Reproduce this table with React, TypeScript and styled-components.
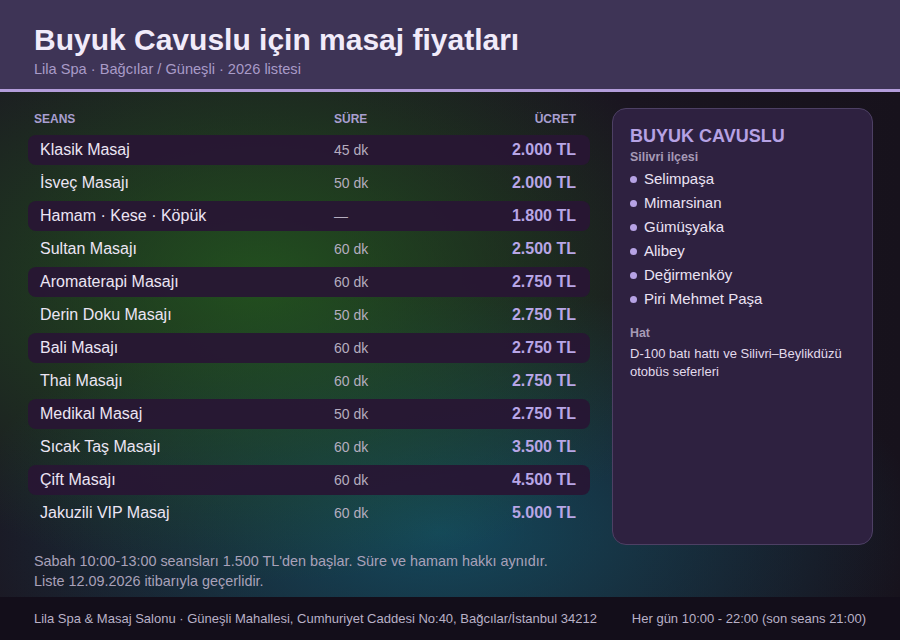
import React from "react";
import styled, { createGlobalStyle } from "styled-components";

const Global = createGlobalStyle`
  html, body { margin: 0; padding: 0; background: #1a1420; }
  * { box-sizing: border-box; }
  body { font-family: "Liberation Sans", Arial, sans-serif; }
`;

const Page = styled.div`
  width: 900px;
  height: 640px;
  display: flex;
  flex-direction: column;
  overflow: hidden;
  background: #1a1420;
`;

const Header = styled.header`
  height: 92px;
  background: #3e3456;
  border-bottom: 3px solid #b39ddb;
  padding: 22px 34px 0;
`;

const Title = styled.h1`
  margin: 0;
  font-size: 30px;
  line-height: 36px;
  font-weight: 700;
  color: #f1ebfa;
`;

const Subtitle = styled.div`
  margin-top: 1px;
  font-size: 14.6px;
  line-height: 20px;
  color: #a99bc8;
`;

const Main = styled.main`
  flex: 1;
  display: flex;
  gap: 22px;
  padding: 17px 27px 0 28px;
  background:
    radial-gradient(ellipse 460px 300px at 260px 190px, rgba(36, 96, 30, 0.78), rgba(36, 96, 30, 0) 100%),
    radial-gradient(ellipse 480px 250px at 440px 440px, rgba(18, 86, 108, 0.78), rgba(18, 86, 108, 0) 100%),
    linear-gradient(90deg, #1b1722 0%, #1a1520 70%, #17121c 100%);
`;

const TableCol = styled.section`
  width: 562px;
  display: flex;
  flex-direction: column;
`;

const HeadRow = styled.div`
  display: grid;
  grid-template-columns: 300px 1fr auto;
  padding: 0 14px 0 6px;
  height: 20px;
  align-items: center;
  font-size: 12px;
  font-weight: 700;
  color: #a99fd0;
  margin-bottom: 6px;
`;

const HeadCell = styled.div<{ $right?: boolean }>`
  text-align: ${(p) => (p.$right ? "right" : "left")};
`;

const Rows = styled.div`
  display: flex;
  flex-direction: column;
  gap: 3px;
`;

const Row = styled.div<{ $shade: boolean }>`
  display: grid;
  grid-template-columns: 294px 1fr auto;
  align-items: center;
  height: 30px;
  padding: 0 14px 0 12px;
  border-radius: 8px;
  background: ${(p) => (p.$shade ? "rgba(40, 22, 52, 0.93)" : "transparent")};
`;

const Name = styled.div`
  font-size: 16px;
  color: #ece5f4;
`;

const Duration = styled.div`
  font-size: 14px;
  color: #b5adbf;
`;

const Price = styled.div`
  font-size: 16px;
  font-weight: 700;
  color: #b8a6e6;
  text-align: right;
`;

const Notes = styled.p`
  margin: 23px 0 0 6px;
  font-size: 14.4px;
  line-height: 20px;
  color: #a9a1b9;
`;

const Card = styled.aside`
  width: 261px;
  height: 437px;
  margin-top: -1px;
  border-radius: 14px;
  background: #2e2140;
  border: 1px solid #4d4064;
  padding: 16px 17px;
`;

const CardTitle = styled.h2`
  margin: 0;
  font-size: 18px;
  line-height: 22px;
  font-weight: 700;
  color: #b6a2e4;
`;

const Label = styled.div<{ $gap?: number }>`
  margin-top: ${(p) => p.$gap ?? 0}px;
  font-size: 12.4px;
  line-height: 16px;
  font-weight: 700;
  color: #a69ab6;
`;

const List = styled.ul`
  list-style: none;
  margin: 1px 0 0;
  padding: 0;
`;

const Item = styled.li`
  display: flex;
  align-items: center;
  gap: 7px;
  height: 24px;
  font-size: 15px;
  color: #ebe3f4;
  &::before {
    content: "";
    width: 7px;
    height: 7px;
    margin-top: 2px;
    border-radius: 50%;
    background: #b6a2e4;
  }
`;

const CardText = styled.p`
  margin: 4px 0 0;
  font-size: 13px;
  line-height: 18px;
  color: #e2daec;
`;

const Footer = styled.footer`
  height: 43px;
  background: #130e1a;
  padding: 0 34px;
  display: flex;
  align-items: center;
  justify-content: space-between;
  font-size: 13px;
  color: #b9b1c7;
`;

const items: [string, string, string][] = [
  ["Klasik Masaj", "45 dk", "2.000 TL"],
  ["İsveç Masajı", "50 dk", "2.000 TL"],
  ["Hamam · Kese · Köpük", "—", "1.800 TL"],
  ["Sultan Masajı", "60 dk", "2.500 TL"],
  ["Aromaterapi Masajı", "60 dk", "2.750 TL"],
  ["Derin Doku Masajı", "50 dk", "2.750 TL"],
  ["Bali Masajı", "60 dk", "2.750 TL"],
  ["Thai Masajı", "60 dk", "2.750 TL"],
  ["Medikal Masaj", "50 dk", "2.750 TL"],
  ["Sıcak Taş Masajı", "60 dk", "3.500 TL"],
  ["Çift Masajı", "60 dk", "4.500 TL"],
  ["Jakuzili VIP Masaj", "60 dk", "5.000 TL"],
];

const places = ["Selimpaşa", "Mimarsinan", "Gümüşyaka", "Alibey", "Değirmenköy", "Piri Mehmet Paşa"];

export default function App() {
  return (
    <Page>
      <Global />
      <Header>
        <Title>Buyuk Cavuslu için masaj fiyatları</Title>
        <Subtitle>Lila Spa · Bağcılar / Güneşli · 2026 listesi</Subtitle>
      </Header>
      <Main>
        <TableCol>
          <HeadRow>
            <HeadCell>SEANS</HeadCell>
            <HeadCell>SÜRE</HeadCell>
            <HeadCell $right>ÜCRET</HeadCell>
          </HeadRow>
          <Rows>
            {items.map(([n, d, p], i) => (
              <Row key={n} $shade={i % 2 === 0}>
                <Name>{n}</Name>
                <Duration>{d}</Duration>
                <Price>{p}</Price>
              </Row>
            ))}
          </Rows>
          <Notes>
            Sabah 10:00-13:00 seansları 1.500 TL'den başlar. Süre ve hamam hakkı aynıdır.
            <br />
            Liste 12.09.2026 itibarıyla geçerlidir.
          </Notes>
        </TableCol>
        <Card>
          <CardTitle>BUYUK CAVUSLU</CardTitle>
          <Label $gap={2}>Silivri ilçesi</Label>
          <List>
            {places.map((p) => (
              <Item key={p}>{p}</Item>
            ))}
          </List>
          <Label $gap={15}>Hat</Label>
          <CardText>D-100 batı hattı ve Silivri–Beylikdüzü otobüs seferleri</CardText>
        </Card>
      </Main>
      <Footer>
        <span>Lila Spa &amp; Masaj Salonu · Güneşli Mahallesi, Cumhuriyet Caddesi No:40, Bağcılar/İstanbul 34212</span>
        <span>Her gün 10:00 - 22:00 (son seans 21:00)</span>
      </Footer>
    </Page>
  );
}
